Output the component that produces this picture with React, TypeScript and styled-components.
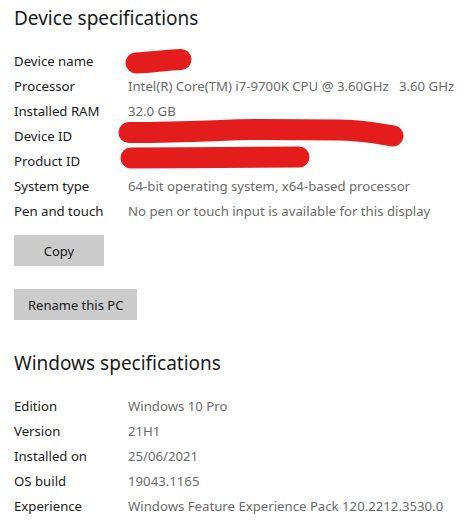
import { Fragment } from 'react';
import styled, { createGlobalStyle } from 'styled-components';

const GlobalStyle = createGlobalStyle`
  html, body {
    margin: 0;
    padding: 0;
    background: #ffffff;
  }
  body {
    font-family: 'Noto Sans', 'Open Sans', 'DejaVu Sans', sans-serif;
    -webkit-font-smoothing: antialiased;
  }
`;

const Page = styled.div`
  padding: 4px 0 0 14px;
  color: #000;
`;

const Title = styled.h2<{ gap?: number }>`
  margin: ${({ gap }) => gap ?? 0}px 0 16px;
  font-size: 19px;
  font-weight: 400;
  line-height: 28px;
  color: #1a1a1a;
`;

const Specs = styled.div`
  display: grid;
  grid-template-columns: 114px 1fr;
  grid-auto-rows: 25px;
  align-items: center;
  font-size: 13.2px;
`;

const Label = styled.div`
  color: #1a1a1a;
  white-space: nowrap;
  line-height: 26px;
`;

const Value = styled.div`
  color: #6b6b6b;
  white-space: nowrap;
  position: relative;
  height: 25px;
  line-height: 26px;
`;

const Redaction = styled.svg`
  position: absolute;
  left: 0;
  top: 0;
  overflow: visible;
  width: 10px;
  height: 25px;

  path {
    fill: none;
    stroke: #e41c1c;
    stroke-width: 21px;
    stroke-linecap: round;
    stroke-linejoin: round;
  }
`;

const Button = styled.button<{ gap: number }>`
  display: block;
  margin-top: ${({ gap }) => gap}px;
  min-width: 90px;
  height: 31px;
  padding: 0 14px;
  border: none;
  background: #cccccc;
  color: #1a1a1a;
  font-family: inherit;
  font-size: 13px;
  cursor: pointer;
`;

type Spec = [string, string | null, string?];

const device: Spec[] = [
  ['Device name', null, 'M8 15 C25 14 40 12 53 11.5'],
  ['Processor', 'Intel(R) Core(TM) i7-9700K CPU @ 3.60GHz\u00a0\u00a0 3.60 GHz'],
  ['Installed RAM', '32.0 GB'],
  ['Device ID', null, 'M1 9.5 C72 9.5 92 6.5 132 6.5 L212 7 C242 8 252 11 265 13'],
  ['Product ID', null, 'M3 10 C60 10 100 9 171 9'],
  ['System type', '64-bit operating system, x64-based processor'],
  ['Pen and touch', 'No pen or touch input is available for this display'],
];

const windows: Spec[] = [
  ['Edition', 'Windows 10 Pro'],
  ['Version', '21H1'],
  ['Installed on', '25/06/2021'],
  ['OS build', '19043.1165'],
  ['Experience', 'Windows Feature Experience Pack 120.2212.3530.0'],
];

function SpecList({ items }: { items: Spec[] }) {
  return (
    <Specs>
      {items.map(([label, value, scribble]) => (
        <Fragment key={label}>
          <Label>{label}</Label>
          <Value>
            {value}
            {scribble && (
              <Redaction>
                <path d={scribble} />
              </Redaction>
            )}
          </Value>
        </Fragment>
      ))}
    </Specs>
  );
}

export default function App() {
  return (
    <>
      <GlobalStyle />
      <Page>
        <Title>Device specifications</Title>
        <SpecList items={device} />
        <Button gap={12}>Copy</Button>
        <Button gap={23}>Rename this PC</Button>
        <Title gap={29}>Windows specifications</Title>
        <SpecList items={windows} />
      </Page>
    </>
  );
}
